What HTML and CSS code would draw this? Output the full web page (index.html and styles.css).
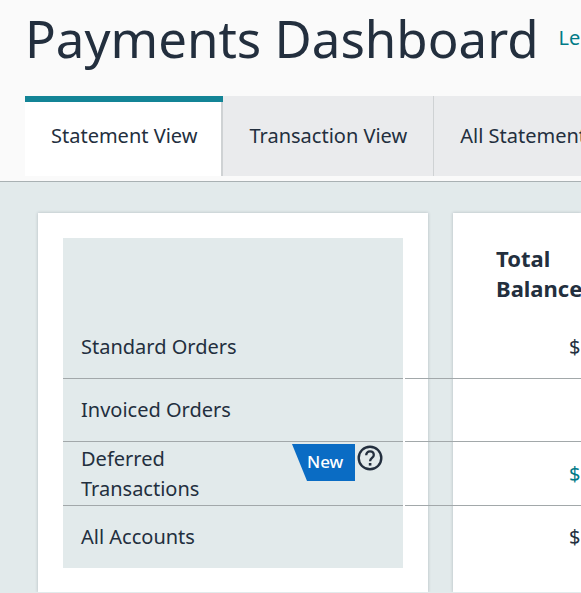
FILE: index.html
```html
<!DOCTYPE html>
<html lang="en">
<head>
    <meta charset="UTF-8">
    <meta name="viewport" content="width=device-width, initial-scale=1.0">
    <title>Payments Dashboard</title>
    <link rel="stylesheet" href="styles.css">
</head>
<body>
    <header class="header">
        <div class="title-row">
            <h1>Payments Dashboard</h1>
            <a href="#" class="learn-link">Le</a>
        </div>
        <nav class="tabs">
            <a href="#" class="tab active">Statement View</a>
            <a href="#" class="tab">Transaction View</a>
            <a href="#" class="tab">All Statements</a>
        </nav>
    </header>
    <main class="summary">
        <div class="panel panel-names"></div>
        <div class="panel panel-totals"></div>
        <table class="accounts">
            <thead>
                <tr>
                    <td></td>
                    <th scope="col">Total<br>Balance</th>
                </tr>
            </thead>
            <tbody>
                <tr>
                    <th scope="row">Standard Orders</th>
                    <td>$</td>
                </tr>
                <tr>
                    <th scope="row">Invoiced Orders</th>
                    <td></td>
                </tr>
                <tr>
                    <th scope="row">
                        <div class="deferred">
                            <span class="deferred-name">Deferred Transactions</span>
                            <span class="badge">New</span>
                            <button class="help-button" aria-label="Help">
                                <svg width="26" height="26" viewBox="0 0 26 26" fill="none" stroke="#232f3e">
                                    <circle cx="13" cy="13" r="11.3" stroke-width="2.4"/>
                                    <path d="M9.2 10.3C9.2 7.9 10.8 6.4 13 6.4s3.8 1.5 3.8 3.6c0 2.8-3.7 3.2-3.7 6.2" stroke-width="2.3"/>
                                    <path d="M13.1 18v2.6" stroke-width="2.6"/>
                                </svg>
                            </button>
                        </div>
                    </th>
                    <td><a href="#">$</a></td>
                </tr>
                <tr>
                    <th scope="row">All Accounts</th>
                    <td>$</td>
                </tr>
            </tbody>
        </table>
    </main>
</body>
</html>
```
FILE: styles.css
```css
:root {
    --color-text: #232f3e;
    --color-teal: #007a87;
    --color-tint: #e2eaeb;
    --color-line: #a2a8aa;
}

* {
    padding: 0;
    margin: 0;
    box-sizing: border-box;
}

body {
    font-family: "Noto Sans", "Open Sans", sans-serif;
    font-size: 20px;
    line-height: 30px;
    color: var(--color-text);
    background-color: var(--color-tint);
    overflow: hidden;
}

a {
    color: var(--color-teal);
    text-decoration: none;
}

.header {
    background-color: #fafafa;
    border-bottom: 1px solid #a9b1b3;
    padding: 0 0 5px 25px;
}

.title-row {
    display: flex;
    align-items: center;
    gap: 20px;
    height: 96px;
    padding-bottom: 20px;
    white-space: nowrap;
}

h1 {
    font-size: 51px;
    font-weight: 400;
    line-height: 60px;
}

.tabs {
    display: flex;
    white-space: nowrap;
}

.tab {
    height: 80px;
    padding: 24px 26px;
    line-height: 32px;
    color: var(--color-text);
    background-color: #eaebed;
    border-right: 1px solid #cfd2d4;
}

.tab.active {
    background-color: #fff;
    border-top: 6px solid #138496;
    border-right: none;
    box-shadow: inset -2px 0 #cfd2d4;
    padding-top: 18px;
}

/* the table lies over both panels so its lines run across the gap */
.summary {
    display: grid;
    grid-template-columns: 390px 1fr;
    column-gap: 25px;
    padding: 31px 0 0 38px;
}

.panel {
    grid-row: 1;
    background-color: #fff;
    box-shadow: 0 0 3px rgba(35, 47, 62, 0.25);
}

.panel-names {
    grid-column: 1;
}

.panel-totals {
    grid-column: 2;
}

.accounts {
    grid-row: 1;
    grid-column: 1 / -1;
    margin: 25px 0 24px 23px;
    border-collapse: separate;
    border-spacing: 2px 0;
}

.accounts th,
.accounts td {
    height: 63px;
    border-bottom: 1px solid var(--color-line);
}

.accounts thead td,
.accounts thead th {
    height: 78px;
    border-bottom: none;
}

.accounts thead th {
    padding: 5px 0 13px 91px;
    font-size: 22px;
    text-align: left;
    font-weight: 700;
}

.accounts thead td,
.accounts tbody th {
    width: 340px;
    min-width: 340px;
    padding: 0 18px;
    text-align: left;
    font-weight: 400;
    background-color: var(--color-tint);
}

.accounts tbody td {
    padding-right: 2px;
    text-align: right;
}

.accounts tbody tr:last-child th,
.accounts tbody tr:last-child td {
    height: 62px;
    border-bottom: none;
}

.deferred {
    display: flex;
    align-items: flex-start;
    padding: 2px 0 1px;
}

.deferred-name {
    width: 130px;
    margin-right: auto;
}

.badge {
    width: 63px;
    height: 37px;
    padding-left: 15px;
    font-size: 17px;
    font-weight: 500;
    line-height: 36px;
    color: #fff;
    background-color: #0a6cc4;
    clip-path: polygon(0 0, 100% 0, 100% 100%, 15px 100%);
}

.help-button {
    width: 26px;
    height: 26px;
    margin: 1px 2px 0;
    border: none;
    background: none;
    cursor: pointer;
}

.help-button svg {
    display: block;
}
```
